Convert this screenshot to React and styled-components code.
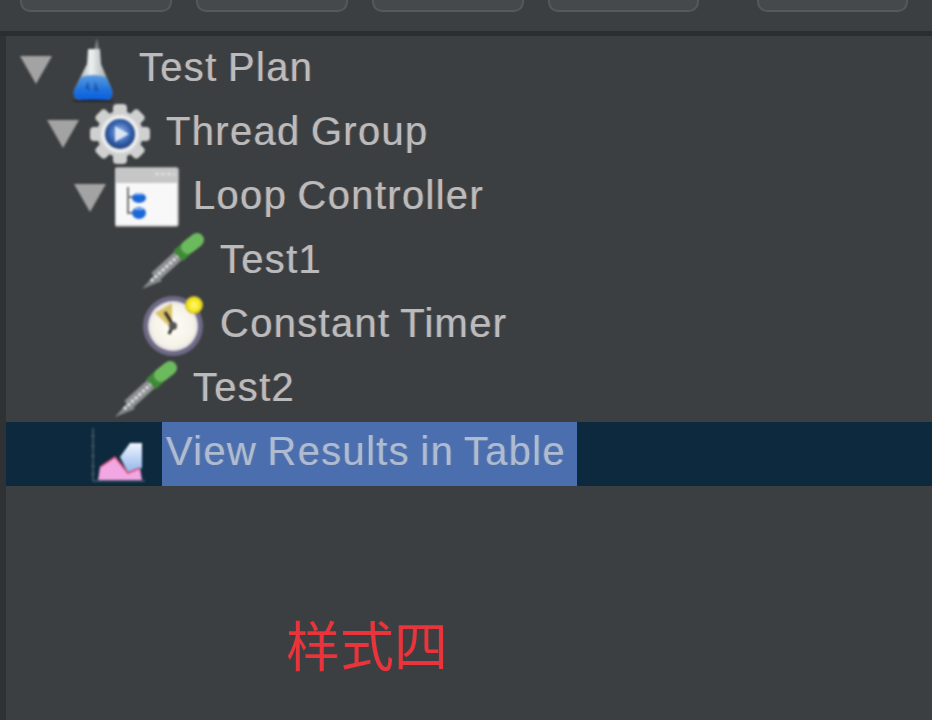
import React from 'react';
import styled, { createGlobalStyle } from 'styled-components';

const GlobalStyle = createGlobalStyle`
  html, body {
    margin: 0;
    padding: 0;
    height: 100%;
    background: #3c3f41;
    overflow: hidden;
  }
`;

const FlaskIcon = () => (
  <svg width="64" height="64" viewBox="0 0 64 64">
    <defs>
      <linearGradient id="flaskGlass" x1="0" y1="0" x2="1" y2="0">
        <stop offset="0" stopColor="#8d9396" />
        <stop offset="0.45" stopColor="#eef1f1" />
        <stop offset="1" stopColor="#8f9598" />
      </linearGradient>
      <linearGradient id="flaskLiquid" x1="0" y1="0" x2="0" y2="1">
        <stop offset="0" stopColor="#5c9ce0" />
        <stop offset="0.6" stopColor="#1f72dc" />
        <stop offset="1" stopColor="#0a5fe0" />
      </linearGradient>
    </defs>
    <path d="M36 0 L38 11 L33 12 Z" fill="#7b8082" />
    <path d="M27 11 L39 11 L40 26 L51 52 Q53 62 44 62 L21 62 Q11 62 13 52 L26 26 Z" fill="url(#flaskGlass)" />
    <path d="M20 39 Q32 35 45 39 L51 52 Q53 62 44 62 L21 62 Q11 62 13 52 Z" fill="url(#flaskLiquid)" />
    <path d="M24 50 L27 43 L29 53 Z M34 43 L38 53 L33 53 Z" fill="#1a4c9c" opacity="0.7" />
    <ellipse cx="32" cy="63" rx="21" ry="1.5" fill="#23262a" />
  </svg>
);

const GearIcon = () => (
  <svg width="64" height="64" viewBox="0 0 64 64">
    <defs>
      <radialGradient id="gearHub" cx="0.5" cy="0.45" r="0.6">
        <stop offset="0" stopColor="#9ebde9" />
        <stop offset="0.55" stopColor="#3a68b4" />
        <stop offset="1" stopColor="#16336e" />
      </radialGradient>
    </defs>
    <g fill="#cfd0d0">
      <circle cx="32" cy="32" r="23" />
      {[0, 45, 90, 135, 180, 225, 270, 315].map((deg) => (
        <rect key={deg} x="25" y="2" width="14" height="14" rx="4" transform={`rotate(${deg} 32 32)`} />
      ))}
    </g>
    <circle cx="32" cy="32" r="19" fill="#ececec" />
    <circle cx="32" cy="32" r="15" fill="url(#gearHub)" />
    <path d="M27 24 L41 32 L27 40 Z" fill="#dbe5f5" />
  </svg>
);

const LoopIcon = () => (
  <svg width="64" height="64" viewBox="0 0 64 64">
    <rect x="0" y="2" width="63" height="58" rx="2" fill="#f8f8f8" stroke="#bdbdbd" strokeWidth="1.5" />
    <rect x="1" y="3" width="61" height="14" fill="#c6c6c6" />
    <path d="M40 8 H60" stroke="#dcdcdc" strokeWidth="3" strokeDasharray="4 2" />
    <path d="M13 21 V47 H20 M13 31 H20" stroke="#777777" strokeWidth="2" fill="none" />
    <ellipse cx="24" cy="32" rx="7" ry="5" fill="#1c68d8" />
    <ellipse cx="24" cy="47" rx="7" ry="6" fill="#1c68d8" />
    <rect x="20" y="27" width="8" height="2" fill="#86b0ec" />
    <rect x="20" y="42" width="8" height="2" fill="#86b0ec" />
  </svg>
);

const DropperIcon = () => (
  <svg width="64" height="64" viewBox="0 0 64 64">
    <path d="M0 59 L13 44 L20 51 Z" fill="#85898a" />
    <path d="M13 47 L36 26" stroke="#8e9192" strokeWidth="11" />
    <path d="M9 51 L36 26" stroke="#e8eaea" strokeWidth="3" strokeDasharray="3 2" />
    <path d="M36 26 L44 19" stroke="#3f8a38" strokeWidth="14" />
    <path d="M46 17 L55 10" stroke="#6cba5e" strokeWidth="14" strokeLinecap="round" />
  </svg>
);

const TimerIcon = () => (
  <svg width="64" height="64" viewBox="0 0 64 64">
    <defs>
      <radialGradient id="timerFace" cx="0.5" cy="0.5" r="0.55">
        <stop offset="0" stopColor="#fffdf5" />
        <stop offset="0.75" stopColor="#f5f2e8" />
        <stop offset="1" stopColor="#d8d4e0" />
      </radialGradient>
      <radialGradient id="timerDot" cx="0.5" cy="0.5" r="0.5">
        <stop offset="0" stopColor="#fff97a" />
        <stop offset="0.7" stopColor="#f5e61a" />
        <stop offset="1" stopColor="#c2b030" />
      </radialGradient>
    </defs>
    <circle cx="31" cy="32" r="30" fill="#6f6a86" />
    <circle cx="31" cy="32" r="25" fill="url(#timerFace)" />
    <path d="M30 35 L13 19 L30 9 Z" fill="#d9c168" />
    <path d="M23 18 L31 31 L27 40" stroke="#2a2a2a" strokeWidth="3" fill="none" />
    <circle cx="31" cy="32" r="4" fill="#555" />
    <circle cx="52" cy="11" r="9" fill="url(#timerDot)" />
  </svg>
);

const ChartIcon = () => (
  <svg width="64" height="64" viewBox="0 0 64 64">
    <defs>
      <linearGradient id="chartBlue" x1="0" y1="0" x2="0" y2="1">
        <stop offset="0" stopColor="#f0f6ff" />
        <stop offset="1" stopColor="#8fb4ea" />
      </linearGradient>
    </defs>
    <path d="M5 6 V59 H57" stroke="#4a5c6a" strokeWidth="1.5" fill="none" />
    <path d="M3 14 H7 M3 24 H7 M3 34 H7 M3 44 H7 M3 52 H7" stroke="#4a5c6a" strokeWidth="1" />
    <path d="M32 35 L42 21 L54 21 L54 46 L40 51 Z" fill="url(#chartBlue)" />
    <path d="M10 58 L12 45 L27 35 L40 51 L52 46 L54 58 Z" fill="#f2a6e2" />
    <path d="M12 45 L27 35 L40 51 L52 46" stroke="#d8486e" strokeWidth="1.5" fill="none" />
  </svg>
);

const Page = styled.div`
  display: flex;
  flex-direction: column;
  width: 932px;
  height: 720px;
  overflow: hidden;
  background: #3c3f41;
`;

const Toolbar = styled.div`
  display: flex;
  flex: none;
  align-items: flex-end;
  gap: 24px;
  height: 12px;
  padding: 0 0 19px 20px;
  border-bottom: 5px solid #2b2e30;
  overflow: hidden;
`;

const ToolButton = styled.div`
  flex: none;
  box-sizing: border-box;
  width: ${({ $width }) => $width}px;
  height: 30px;
  margin-left: ${({ $offset }) => $offset || 0}px;
  background: #45494b;
  border: 2px solid #55595b;
  border-radius: 10px;
  filter: blur(0.6px);
`;

const Body = styled.div`
  flex: 1;
  border-left: 6px solid #2f3234;
  padding-top: 2px;
`;

const Row = styled.div`
  display: flex;
  align-items: stretch;
  height: 64px;
  padding-left: ${({ $depth }) => 14 + $depth * 27}px;
  background: ${({ $selected }) => ($selected ? '#0d293e' : 'transparent')};
`;

const ArrowSlot = styled.div`
  display: flex;
  flex: none;
  align-items: center;
  width: 32px;
`;

const Arrow = styled.div`
  width: 0;
  height: 0;
  border-left: 16px solid transparent;
  border-right: 16px solid transparent;
  border-top: 28px solid #a3a3a3;
  filter: blur(0.8px);
`;

const IconSlot = styled.div`
  display: flex;
  flex: none;
  align-items: center;
  justify-content: center;
  width: 82px;
  margin-right: 1px;
  svg {
    display: block;
    filter: blur(1px);
  }
`;

const Label = styled.div`
  padding: 0 11px 6px 4px;
  font-family: "Liberation Sans", Arial, sans-serif;
  font-size: 40px;
  line-height: 58px;
  letter-spacing: 1.3px;
  word-spacing: -2px;
  white-space: nowrap;
  color: ${({ $selected }) => ($selected ? '#aebbd0' : '#bbbbbb')};
  background: ${({ $selected }) => ($selected ? '#4b6eaf' : 'transparent')};
  text-shadow: ${({ $selected }) =>
    $selected
      ? '-1px 0 rgba(150, 190, 220, 0.25), 1px 0 rgba(190, 170, 140, 0.25)'
      : '-1px 0 rgba(90, 150, 220, 0.45), 1px 0 rgba(210, 120, 60, 0.45)'};
`;

const LabelText = styled.span`
  display: block;
  filter: blur(0.7px);
`;

const Caption = styled.div`
  margin: 130px 0 0 280px;
  font-family: "Noto Sans CJK SC", sans-serif;
  font-size: 54px;
  line-height: 56px;
  color: #e8343a;
  filter: blur(0.5px);
`;

const rows = [
  { label: 'Test Plan', depth: 0, open: true, Icon: FlaskIcon },
  { label: 'Thread Group', depth: 1, open: true, Icon: GearIcon },
  { label: 'Loop Controller', depth: 2, open: true, Icon: LoopIcon },
  { label: 'Test1', depth: 3, Icon: DropperIcon },
  { label: 'Constant Timer', depth: 3, Icon: TimerIcon },
  { label: 'Test2', depth: 2, Icon: DropperIcon },
  { label: 'View Results in Table', depth: 1, selected: true, Icon: ChartIcon },
];

const App = () => (
  <Page>
    <GlobalStyle />
    <Toolbar>
      <ToolButton $width={152} />
      <ToolButton $width={152} />
      <ToolButton $width={152} />
      <ToolButton $width={151} />
      <ToolButton $width={151} $offset={34} />
    </Toolbar>
    <Body>
      {rows.map(({ label, depth, open, selected, Icon }) => (
        <Row key={label} $depth={depth} $selected={selected}>
          <ArrowSlot>{open && <Arrow />}</ArrowSlot>
          <IconSlot>
            <Icon />
          </IconSlot>
          <Label $selected={selected}>
            <LabelText>{label}</LabelText>
          </Label>
        </Row>
      ))}
      <Caption>样式四</Caption>
    </Body>
  </Page>
);

export default App;
